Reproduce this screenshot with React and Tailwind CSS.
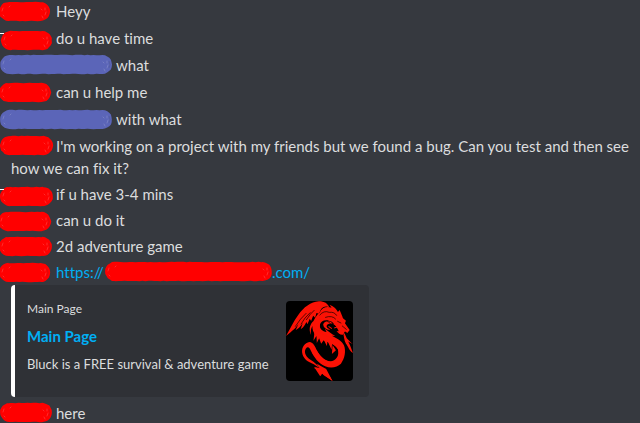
const RED = '#ff0000'
const BLUE = '#5b65b8'

// Outline of a felt-pen stroke: a capsule whose edge wobbles a little.
function strokeOutline(left, top, width, height, seed) {
  const r = height / 2
  const points = []
  const noise = (i) => {
    const n = Math.sin((i + 1) * 12.9898 + seed * 78.233) * 43758.5453
    return (n - Math.floor(n) - 0.5) * 0.6
  }
  for (let x = left + r, i = 0; x < left + width - r; x += 3, i++) points.push([x, top + noise(i)])
  for (let a = -90; a <= 90; a += 15) {
    const t = (a * Math.PI) / 180
    const q = r + noise(a)
    points.push([left + width - r + Math.cos(t) * q, top + r + Math.sin(t) * q])
  }
  for (let x = left + width - r, i = 200; x > left + r; x -= 3, i++) points.push([x, top + height + noise(i)])
  for (let a = 90; a <= 270; a += 15) {
    const t = (a * Math.PI) / 180
    const q = r + noise(a)
    points.push([left + r + Math.cos(t) * q, top + r + Math.sin(t) * q])
  }
  return 'M' + points.map(([x, y]) => x.toFixed(1) + ' ' + y.toFixed(1)).join('L') + 'Z'
}

function Scribble({ color, left = 0, top = 1, width, height = 19, seed = 1, className }) {
  const end = left + width
  return (
    <svg className={'inline-block h-[22px] overflow-visible align-top ' + className} aria-hidden="true">
      <path d={strokeOutline(left, top, width, height, seed)} fill={color} />
      <g stroke="#ffffff" strokeWidth="0.6" strokeLinecap="round" opacity="0.28" fill="none">
        <path d={`M${end - 5} ${top + 6}v2m1 2l-1 3m-3 1l1 2m-2-9l1 1`} />
        <path d={`M${left + 4} ${top + 6}l-1 3m1 4l1 1m5-9l1-1`} />
      </g>
      <path d={`M${end - 3} ${top + 6}q2 4 0 7`} stroke="#36393f" strokeWidth="0.5" opacity="0.35" fill="none" />
    </svg>
  )
}

function Dragon() {
  return (
    <svg viewBox="0 0 200 240" preserveAspectRatio="none" className="h-20 w-[67px] shrink-0 rounded bg-black" role="img" aria-label="Red dragon">
      <g fill="#fb1205">
        <path d="M0 105C14 82 22 62 36 43C53 18 74 3 98 1C116 1 124 8 129 18C118 14 110 17 105 24L98 38L91 36L87 50L81 44L75 60L71 53L64 70L61 63C54 77 49 82 44 84L50 66C42 79 36 84 29 87L37 69C25 87 12 94 0 105Z" />
        <path d="M101 34C107 19 122 15 136 20L130 11C144 17 151 24 155 33L160 27C165 38 168 45 170 52L179 59L176 67L190 87L183 96L176 91L170 101C161 102 155 96 151 90L158 91L151 79C145 68 139 61 128 59C115 55 103 61 101 72C100 84 109 91 121 93L116 83C128 91 134 98 147 105L137 104C151 112 167 119 173 133C180 151 175 173 164 188C153 199 135 203 117 196C96 187 84 169 75 151C70 138 65 135 59 143C52 155 61 168 73 176C86 184 94 192 104 203C119 211 131 223 139 240L113 223L105 213L103 224L95 208L84 201C91 200 96 200 101 202L83 190C66 183 50 174 48 154C47 138 56 125 70 123C82 124 87 137 92 148C101 166 116 181 136 182C151 181 158 168 158 154C157 143 150 134 139 128C122 121 101 116 89 103C81 94 78 84 79 75C74 83 73 91 75 102C67 85 71 70 82 60L78 73C83 55 90 43 101 34Z" />
        <path d="M111 70C115 59 131 58 139 68C131 66 122 68 121 76C122 82 128 82 132 87C120 86 112 81 111 70ZM85 94L82 119L91 104L92 126L99 112L105 128L113 117L122 135L124 120L136 146L138 123ZM139 132L137 159L149 148Z" />
        <path d="M128 50L148 56L164 72L178 92L160 88L148 70ZM84 66L103 52L100 88L116 103L90 100Z" />
        <path d="M170 90C180 103 181 115 188 126C193 136 195 145 200 156C187 147 186 136 179 128C173 119 173 105 170 90ZM171 102C187 115 189 122 200 130L183 120Z" />
        <path d="M84 198L101 202L92 188L120 204L139 240L108 218L102 226Z" />
      </g>
      <path d="M92 96C108 116 148 113 162 142C168 166 156 187 132 189C112 188 98 174 86 154" fill="none" stroke="#fb1205" strokeWidth="15" strokeLinecap="round" />
      <g fill="none" stroke="#080000" strokeWidth="2" strokeLinecap="round">
        <path d="M28 76Q43 52 60 37M45 69Q55 50 72 35M61 56Q72 38 84 28M101 42Q113 27 129 34Q145 32 151 43M118 49Q138 42 148 54M154 61L164 66M168 75L180 85M123 60L132 67" />
      </g>
      <path d="M142 68L155 77L144 81M127 76L137 83M157 90L173 87" fill="none" stroke="#fb1205" strokeWidth="3" />
    </svg>
  )
}

const own = 'mr-1 -ml-[11px] w-[52px]'
const other = 'mr-1 -ml-[11px] w-28'

const first = [
  { text: 'Heyy', mark: { color: RED, left: -1, top: 2, width: 51, seed: 1 } },
  { text: 'do u have time', tick: true, mark: { color: RED, left: 1, top: 4, width: 51, seed: 2 } },
  { text: 'what', mark: { color: BLUE, width: 112, seed: 3 } },
  { text: 'can u help me', mark: { color: RED, left: -1, top: 2, width: 52, seed: 4 } },
  { text: 'with what', mark: { color: BLUE, top: 2, width: 112, seed: 5 } },
  {
    text: "I'm working on a project with my friends but we found a bug. Can you test and then see how we can fix it?",
    mark: { color: RED, width: 53, seed: 6 },
  },
]

const second = [
  { text: 'if u have 3-4 mins', tick: true, mark: { color: RED, top: 4, width: 53, seed: 7 } },
  { text: 'can u do it', mark: { color: RED, left: -2, top: 3, width: 53, seed: 8 } },
  { text: '2d adventure game', mark: { color: RED, left: -1, top: 2, width: 53, seed: 9 } },
]

function Message({ mark, tick, children }) {
  return (
    <li className="relative pl-[11px]">
      {tick && <span className="absolute top-1.5 left-0 h-px w-1 bg-white" />}
      <Scribble {...mark} className={mark.color === BLUE ? other : own} />
      {children}
    </li>
  )
}

export default function App() {
  return (
    <main className="min-h-screen overflow-hidden bg-[#36393f] font-[Lato,sans-serif] text-[15px] leading-[22px] text-[#dcddde] [font-variant-ligatures:none]">
      <ul className="flex flex-col gap-[5px]">
        {first.map((m) => (
          <Message key={m.text} {...m}>{m.text}</Message>
        ))}
      </ul>
      <ul className="mt-1 flex flex-col gap-1">
        {second.map((m) => (
          <Message key={m.text} {...m}>{m.text}</Message>
        ))}
        <Message mark={{ color: RED, left: -1, top: 2, width: 51, seed: 10 }}>
          <a href="#site" className="text-[#00aff4]">
            https://
            <Scribble color={RED} left={1} width={167} seed={11} className="w-[168px]" />
            .com/
          </a>
        </Message>
      </ul>
      <article className="mt-0.5 ml-[11px] flex w-[358px] max-w-full justify-between rounded border-l-4 border-white bg-[#2f3136] py-4 pr-4 pl-3">
        <div className="whitespace-nowrap">
          <p className="text-xs leading-4">Main Page</p>
          <h2 className="mt-2 font-bold">
            <a href="#main" className="text-[#00aff4]">Main Page</a>
          </h2>
          <p className="mt-2 text-[13px] leading-[18px]">Bluck is a FREE survival &amp; adventure game</p>
        </div>
        <Dragon />
      </article>
      <ul className="mt-[5px]">
        <Message mark={{ color: RED, width: 52, seed: 12 }}>here</Message>
      </ul>
    </main>
  )
}
